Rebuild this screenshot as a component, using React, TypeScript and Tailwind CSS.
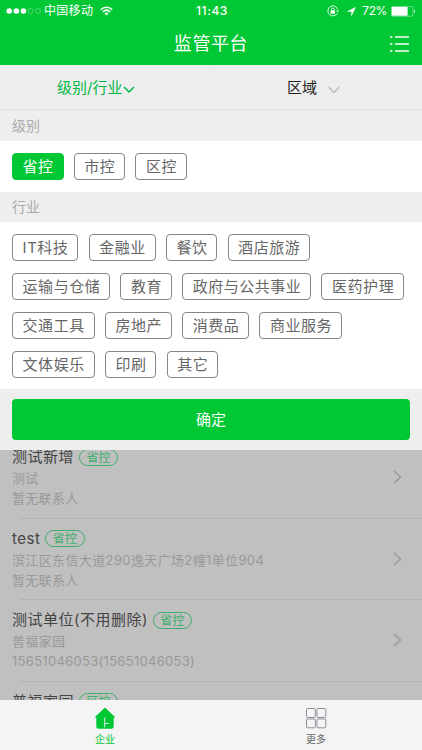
import React from "react";

type Company = {
  id: number;
  name: string;
  level: string;
  address: string;
  contact: string;
};

const levels = ["省控", "市控", "区控"];

const industries = [
  ["IT科技", "金融业", "餐饮", "酒店旅游"],
  ["运输与仓储", "教育", "政府与公共事业", "医药护理"],
  ["交通工具", "房地产", "消费品", "商业服务"],
  ["文体娱乐", "印刷", "其它"],
];

const companies: Company[] = [
  { id: 1, name: "测试新增", level: "省控", address: "测试", contact: "暂无联系人" },
  {
    id: 2,
    name: "test",
    level: "省控",
    address: "滨江区东信大道290逸天广场2幢1单位904",
    contact: "暂无联系人",
  },
  {
    id: 3,
    name: "测试单位(不用删除)",
    level: "省控",
    address: "普福家园",
    contact: "15651046053(15651046053)",
  },
  { id: 4, name: "普福家园", level: "区控", address: "", contact: "" },
];

const StatusBar = () => {
  return (
    <div className="flex h-[22px] items-center text-[12px] leading-[22px] text-white">
      <div className="flex flex-1 items-center pl-[6px]">
        <svg width="36" height="8" viewBox="0 0 36 8" fill="white">
          <circle cx="3.2" cy="4" r="2.8" />
          <circle cx="10.3" cy="4" r="2.8" />
          <circle cx="17.4" cy="4" r="2.8" />
          <g fill="none" stroke="white" strokeWidth="0.6" opacity="0.5">
            <circle cx="24.6" cy="4" r="2.5" />
            <circle cx="32" cy="4" r="2.5" />
          </g>
        </svg>
        <span className="ml-[2px] tracking-[0.3px]">中国移动</span>
        <svg className="ml-[7px]" width="13" height="10" viewBox="0 0 13 10">
          <g fill="none" stroke="white" strokeWidth="1.5">
            <path d="M0.7 3.7C4 0.4 9 0.4 12.3 3.7" />
            <path d="M2.8 6C5 3.8 8 3.8 10.2 6" />
          </g>
          <path d="M6.5 9.4L4.5 7.3Q6.5 5.6 8.5 7.3Z" fill="white" />
        </svg>
      </div>
      <span className="pl-[2px] text-[12px] font-medium tracking-[0.6px]">11:43</span>
      <div className="flex flex-1 items-center justify-end pr-[6px]">
        <svg width="12" height="12" viewBox="0 0 12 12" fill="none" stroke="white">
          <path d="M10.6 4.2A5 5 0 1 0 10.3 8.2" strokeWidth="0.9" />
          <path d="M9 5.4h3l-1.5 1.8z" fill="white" stroke="none" />
          <rect x="3.6" y="5.4" width="4.4" height="3.3" fill="white" stroke="none" />
          <path d="M4.5 5.6V4.4a1.3 1.3 0 0 1 2.6 0v1.2" strokeWidth="0.8" />
        </svg>
        <svg className="ml-[8px]" width="9" height="9" viewBox="0 0 9 9">
          <path d="M8.7 0.3L0.3 4.5H4.5V8.7Z" fill="white" stroke="white" strokeWidth="0.4" />
        </svg>
        <span className="ml-[6px] text-[12px] tracking-[-0.4px]">72%</span>
        <svg className="ml-[4px]" width="25" height="11" viewBox="0 0 25 11">
          <rect
            x="0.4"
            y="0.4"
            width="21.6"
            height="9.8"
            rx="1.4"
            fill="none"
            stroke="white"
            strokeWidth="0.7"
            opacity="0.6"
          />
          <rect x="0.8" y="0.9" width="15.8" height="8.8" fill="white" />
          <path d="M23 3.6q2 1.7 0 3.4z" fill="white" />
        </svg>
      </div>
    </div>
  );
};

const Chip = ({ label, active }: { label: string; active?: boolean }) => {
  return (
    <button
      className={
        active
          ? "h-[27px] shrink-0 rounded-[4px] border border-[#00c734] bg-[#00c734] pr-[8.9px] pl-[9.6px] text-[15px] leading-[25px] tracking-[0.53px] text-white"
          : "h-[27px] shrink-0 rounded-[4px] border border-[#858585] bg-white pr-[8.9px] pl-[9.6px] text-[15px] leading-[25px] tracking-[0.53px] text-[#666]"
      }
    >
      {label}
    </button>
  );
};

const CompanyRow = ({ item }: { item: Company }) => {
  return (
    <li className="flex h-[81.5px] shrink-0 flex-col">
      <div className="flex flex-1 items-center pr-[20px] pl-[12px]">
        <div className="flex-1">
          <div className="flex h-[22px] items-center">
            <span className="text-[15px] leading-[22px] tracking-[0.5px] text-[#444]">
              {item.name}
            </span>
            <span className="ml-[5px] h-[17px] rounded-full border border-[#3fae6c] px-[6.4px] text-[12px] leading-[15px] tracking-[0.2px] text-[#3fae6c]">
              {item.level}
            </span>
          </div>
          <p className="h-[20px] text-[13px] leading-[20px] tracking-[0.37px] text-[#999]">
            {item.address}
          </p>
          <p className="h-[20px] text-[13px] leading-[20px] tracking-[0.3px] text-[#999]">
            {item.contact}
          </p>
        </div>
        <svg width="9" height="14" viewBox="0 0 9 14" fill="none">
          <path d="M1 1l6.5 6L1 13" stroke="#98989d" strokeWidth="1.4" />
        </svg>
      </div>
      <div className="ml-[20px] h-px bg-[#b3b3b6]" />
    </li>
  );
};

const App = () => {
  return (
    <div className="flex h-[750px] w-[422px] flex-col overflow-hidden bg-[#c0c0c0] font-['Inter','Noto_Sans_CJK_SC',sans-serif]">
      <header className="h-[65px] shrink-0 bg-[#00c734]">
        <StatusBar />
        <div className="grid h-[43px] grid-cols-[1fr_auto_1fr] items-center text-white">
          <span />
          <h1 className="text-[18px] leading-[43px] tracking-[0.6px]">监管平台</h1>
          <svg className="mr-[13px] justify-self-end" width="19" height="16" viewBox="0 0 19 16">
            <path
              d="M0 1h2.4M5 1h14M0 8h2.4M5 8h14M0 15h2.4M5 15h14"
              stroke="white"
              strokeWidth="1.3"
            />
          </svg>
        </div>
      </header>

      <div className="relative z-10 shrink-0">
        <div className="grid h-[45px] grid-cols-2 border-b border-[#e2e2e2] bg-[#eeeeee] text-[15px]">
          <div className="flex items-center border-r border-[#e9e9e9] pt-[2px] pl-[57px] text-[#00b845]">
            <span>级别/行业</span>
            <svg className="mt-[4px] ml-[1px]" width="12" height="8" viewBox="0 0 12 8" fill="none">
              <path d="M1 1l5 5 5-5" stroke="#00b845" strokeWidth="1.5" />
            </svg>
          </div>
          <div className="flex items-center pt-[2px] pl-[76px] text-[#222]">
            <span>区域</span>
            <svg className="mt-[4px] ml-[11px]" width="12" height="8" viewBox="0 0 12 8" fill="none">
              <path d="M0.8 1L6 6.5 11.2 1" stroke="#bbb" strokeWidth="1.4" />
            </svg>
          </div>
        </div>

        <div className="h-[31px] bg-[#eeeeee] pl-[12px] text-[14px] leading-[32px] text-[#aaa]">
          级别
        </div>
        <div className="flex h-[51px] gap-[10.2px] bg-white pt-[12px] pl-[12px]">
          {levels.map((level, index) => (
            <Chip key={level} label={level} active={index === 0} />
          ))}
        </div>

        <div className="h-[30px] bg-[#eeeeee] pl-[12px] text-[14px] leading-[30px] text-[#aaa]">
          行业
        </div>
        <div className="flex h-[167px] flex-col gap-[11.8px] bg-white pt-[12.2px] pl-[12px]">
          {industries.map((row) => (
            <div key={row[0]} className="flex gap-[10.2px]">
              {row.map((label) => (
                <Chip key={label} label={label} />
              ))}
            </div>
          ))}
        </div>

        <div className="h-[61px] bg-[#eeeeee] px-[12px] pt-[10px]">
          <button className="h-[41px] w-full rounded-[4px] bg-[#00c734] pt-[2px] text-[15px] text-white">
            确定
          </button>
        </div>
      </div>

      <ul className="-mt-[13px] flex min-h-0 flex-1 flex-col overflow-hidden">
        {companies.map((item) => (
          <CompanyRow key={item.id} item={item} />
        ))}
      </ul>

      <nav className="grid h-[50px] shrink-0 grid-cols-2 bg-[#f4f4f4] text-[10px] leading-[14px]">
        <div className="flex flex-col items-center pt-[7px] pr-[1px] text-[#00c734]">
          <svg width="22" height="22" viewBox="0 0 22 22">
            <path
              d="M11 0.5L0.5 10.6H2.3V19.6Q2.3 21.8 4.5 21.8H17.5Q19.7 21.8 19.7 19.6V10.6H21.5Z"
              fill="#00c734"
            />
            <path d="M10.7 10.5V20.5M10.7 16.5H15" stroke="#f4f4f4" strokeWidth="0.9" />
          </svg>
          <span className="mt-[3px]">企业</span>
        </div>
        <div className="flex flex-col items-center pt-[7px] pr-[1px] text-[#666]">
          <svg width="22" height="22" viewBox="0 0 22 22" fill="none" stroke="#8c8f98">
            <rect x="1.5" y="1.5" width="8.8" height="9" rx="1" />
            <rect x="12" y="1.5" width="8.8" height="9" rx="1" />
            <rect x="1.5" y="12" width="8.8" height="8.8" rx="1" />
            <rect x="12" y="12" width="8.8" height="8.8" rx="1" />
          </svg>
          <span className="mt-[3px]">更多</span>
        </div>
      </nav>
    </div>
  );
};

export default App;
